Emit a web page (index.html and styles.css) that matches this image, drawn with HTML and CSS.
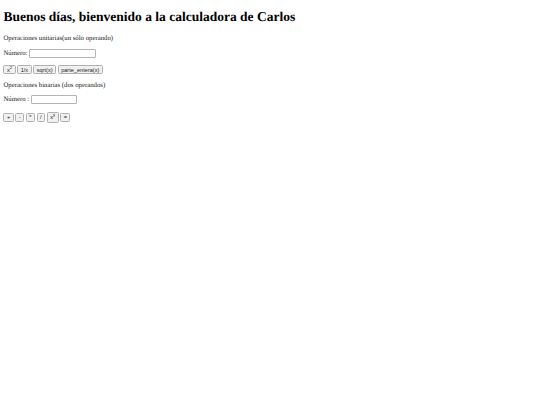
FILE: index.html
```html
<!DOCTYPE html>
<html lang="es">

<head>
    <meta charset="UTF-8" />
    <title>Calculadora</title>
    <link rel="stylesheet" href="styles.css">
</head>

<body>
    <h1>Buenos días, bienvenido a la calculadora de Carlos</h1>

    <p>Operaciones unitarias(un sólo operando)</p>
    <p class="field">Número: <input class="num num-unit" type="text" /></p>
    <p class="btns">
        <button>x<sup>2</sup></button>
        <button>1/x</button>
        <button>sqrt(x)</button>
        <button>parte_entera(x)</button>
    </p>

    <p>Operaciones binarias (dos operandos)</p>
    <p class="field">Número : <input class="num num-bin" type="text" /></p>
    <p class="btns btns-bin">
        <button>+</button>
        <button>-</button>
        <button>*</button>
        <button>/</button>
        <button class="tall">x<sup>y</sup></button>
        <button>=</button>
    </p>
</body>

</html>
```

FILE: styles.css
```css
body {
    margin: 3.4px;
    font-family: "Liberation Serif", serif;
    font-size: 6.75px;
    color: #222;
    background-color: #fff;
    text-rendering: geometricPrecision;
}

h1 {
    font-size: 13.5px;
    margin: 5.5px 0 10px;
    color: #000;
}

p {
    margin: 6.75px 0;
}

.field,
.btns {
    display: flex;
    align-items: center;
    gap: 1.6px;
}

.field {
    white-space: pre;
    gap: 0;
    margin-top: 5.5px;
}

.btns {
    margin-top: 7.5px;
    margin-bottom: 7.5px;
}

.btns-bin {
    margin-top: 7.25px;
}

.num {
    box-sizing: border-box;
    height: 9px;
    padding: 0;
    border: 1px solid #b5b5b5;
    border-radius: 1px;
    background-color: #fff;
}

.num-unit {
    width: 67px;
}

.num-bin {
    width: 46.5px;
}

button {
    font-family: "Liberation Sans", sans-serif;
    font-size: 5.6px;
    height: 9px;
    padding: 0 2.5px;
    border: 1px solid #b0b0b0;
    border-radius: 1.5px;
    background-color: #f0f0f0;
    color: #222;
}

.tall {
    height: 11px;
}

sup {
    font-size: 4.2px;
    line-height: 0;
}
```
